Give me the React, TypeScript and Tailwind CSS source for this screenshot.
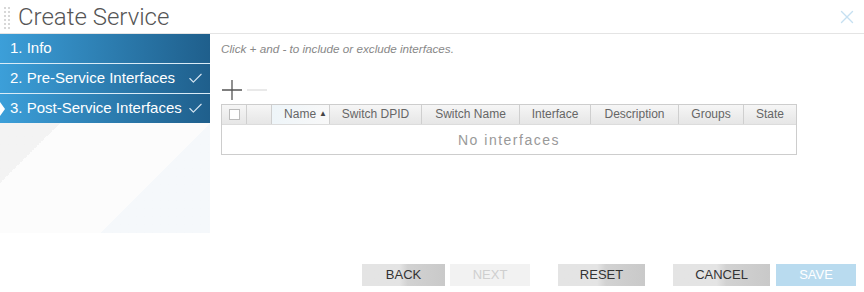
import { Check, X } from "lucide-react";

const cols = [
  { label: "", w: "w-[25px]", check: true },
  { label: "", w: "w-[25px]" },
  { label: "Name", w: "w-[58px]", sort: true },
  { label: "Switch DPID", w: "w-[92px]" },
  { label: "Switch Name", w: "w-[98px]" },
  { label: "Interface", w: "w-[71px]" },
  { label: "Description", w: "w-[88px]" },
  { label: "Groups", w: "w-[65px]" },
  { label: "State", w: "flex-1" },
];

function Step({ label, done, active }: { label: string; done?: boolean; active?: boolean }) {
  return (
    <div className="relative flex h-[29px] items-center justify-between bg-gradient-to-r from-[#3c9fd9] to-[#1f5f8c] pl-[10px] pr-[6px] text-[15px] text-white">
      {active && (
        <div className="absolute left-0 top-1/2 h-0 w-0 -translate-y-1/2 border-y-[7px] border-l-[5px] border-y-transparent border-l-white" />
      )}
      <span>{label}</span>
      {done && <Check size={17} strokeWidth={1.6} className="text-[#d6e6f2]" />}
    </div>
  );
}

function Btn({ label, variant }: { label: string; variant?: "off" | "save" }) {
  const cls =
    variant === "off"
      ? "bg-[#f2f2f2] text-[#cfcfcf]"
      : variant === "save"
        ? "bg-[#b9dbef] text-white"
        : "bg-gradient-to-r from-[#e4e4e4] from-45% via-[#d2d2d2] via-55% to-[#c9c9c9] text-[#333]";
  return (
    <div className={`flex h-[22px] items-center justify-center text-[13px] ${cls}`}>{label}</div>
  );
}

export default function App() {
  return (
    <div className="flex h-[292px] w-[864px] flex-col bg-white font-['Liberation_Sans',Arial,sans-serif] text-[#555]">
      <div className="flex h-[34px] items-center border-b border-[#e4e4e4]">
        <div className="ml-[4px] grid grid-cols-2 gap-x-[2px] gap-y-[2px] pt-[2px]">
          {Array.from({ length: 12 }).map((_, i) => (
            <span key={i} className="h-[2px] w-[2px] bg-[#d8d8d8]" />
          ))}
        </div>
        <span className="ml-[8px] font-['Roboto',sans-serif] text-[24px] font-light text-[#555]">Create Service</span>
        <X size={22} strokeWidth={1.5} className="ml-auto mr-[6px] text-[#c6e0f1]" />
      </div>

      <div className="flex flex-1">
        <div className="flex h-[199px] w-[210px] flex-col bg-[#fcfcfc]">
          <Step label="1. Info" />
          <div className="h-px bg-[#d9ebf6]" />
          <Step label="2. Pre-Service Interfaces" done />
          <div className="h-px bg-[#d9ebf6]" />
          <Step label="3. Post-Service Interfaces" done active />
          <div className="relative flex-1 overflow-hidden">
            <div className="absolute left-0 top-0 h-[60px] w-[60px] bg-gradient-to-br from-[#f3f3f3] from-50% to-transparent to-50%" />
            <div className="absolute right-0 top-0 h-[112px] w-[112px] bg-gradient-to-tl from-[#f5f8fb] from-50% to-transparent to-50%" />
          </div>
        </div>

        <div className="flex flex-1 flex-col pl-[11px]">
          <div className="mt-[6px] text-[11.7px] italic text-[#888]">Click + and - to include or exclude interfaces.</div>
          <div className="mt-[21px] flex items-center gap-[4px]">
            <svg width="22" height="22" viewBox="0 0 22 22">
              <path d="M11 1v20M1 11h20" stroke="#555" strokeWidth="1.3" />
            </svg>
            <svg width="20" height="22" viewBox="0 0 20 22">
              <path d="M0 11h20" stroke="#ddd" strokeWidth="1.3" />
            </svg>
          </div>
          <div className="mt-[3px] w-[576px] border border-[#cdcdcd]">
            <div className="flex h-[19px] bg-gradient-to-b from-[#f6f6f6] to-[#e6e6e6] text-[12px] text-[#666]">
              {cols.map((c, i) => (
                <div
                  key={i}
                  className={`${c.w} flex items-center justify-center ${i < cols.length - 1 ? "border-r border-[#cfcfcf]" : ""} ${c.sort ? "bg-gradient-to-r from-[#eef5f9] to-[#f8f8f8] justify-end pr-[2px]" : ""}`}
                >
                  {c.check && <div className="h-[11px] w-[11px] border border-[#bbb] bg-white" />}
                  {c.label}
                  {c.sort && <span className="ml-[3px] text-[8px] text-[#444]">▲</span>}
                </div>
              ))}
            </div>
            <div className="flex h-[30px] items-center justify-center border-t border-[#dcdcdc] bg-white pt-[2px] text-[14px] tracking-[1.5px] text-[#999]">
              No interfaces
            </div>
          </div>
        </div>
      </div>

      <div className="flex h-[28px] items-start pl-[362px] pb-[6px]">
        <div className="w-[83px]"><Btn label="BACK" /></div>
        <div className="ml-[5px] w-[80px]"><Btn label="NEXT" variant="off" /></div>
        <div className="ml-[28px] w-[87px]"><Btn label="RESET" /></div>
        <div className="ml-[28px] w-[97px]"><Btn label="CANCEL" /></div>
        <div className="ml-[6px] w-[80px]"><Btn label="SAVE" variant="save" /></div>
      </div>
    </div>
  );
}
